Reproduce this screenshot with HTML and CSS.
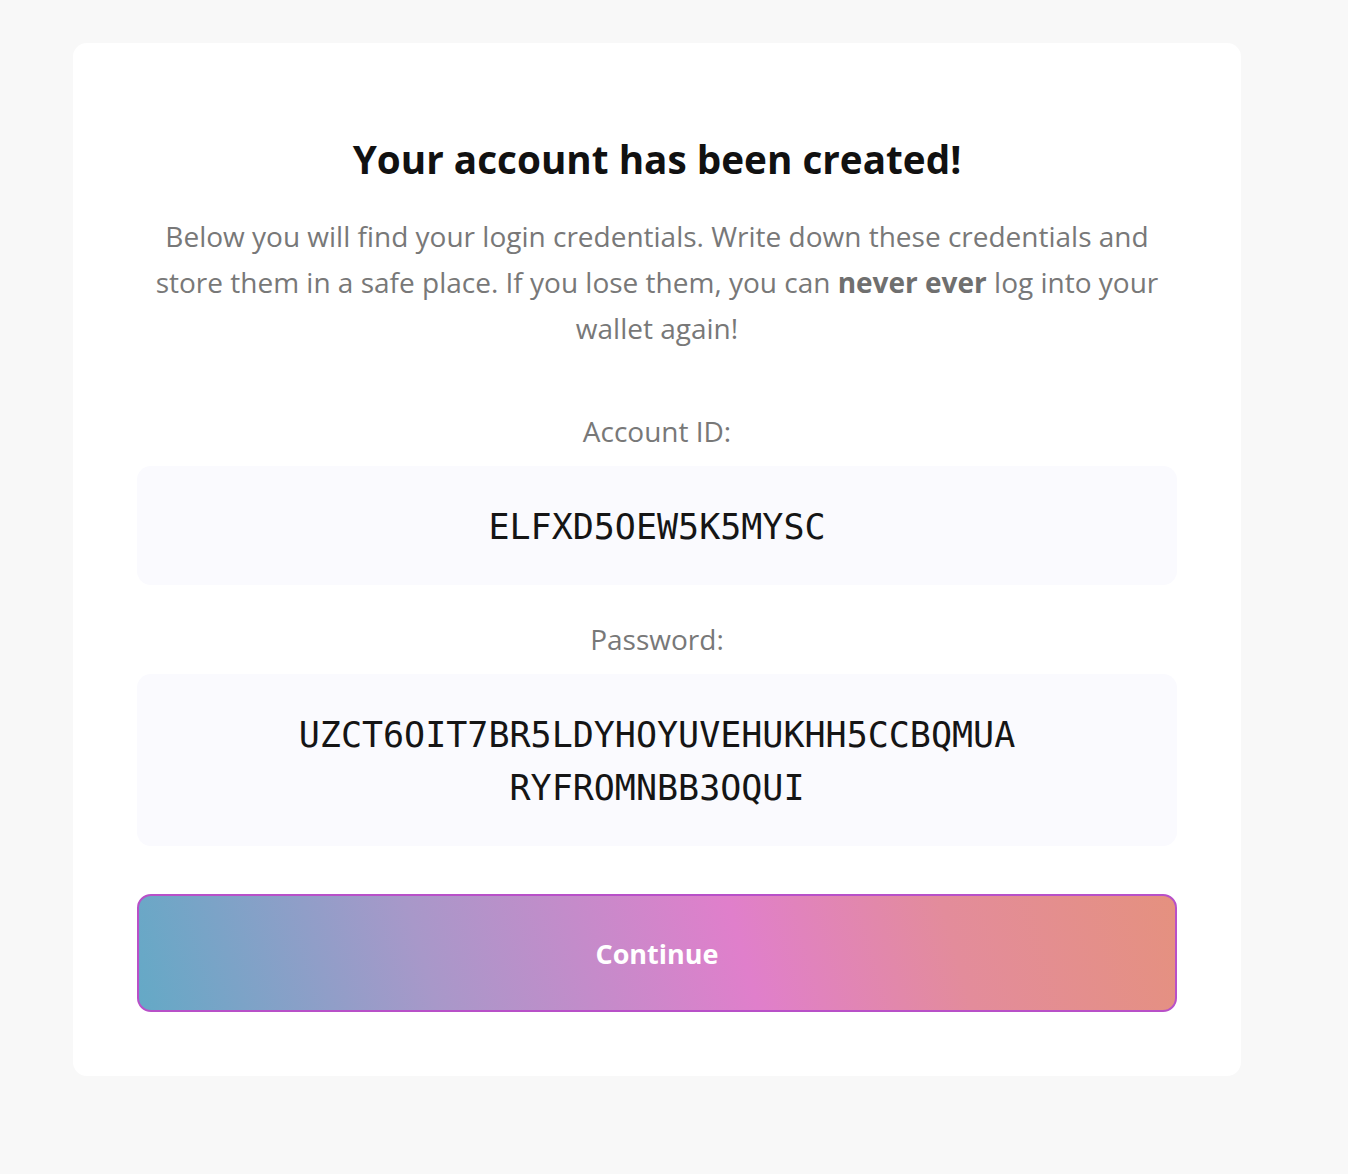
FILE: index.html
```html
<!DOCTYPE html>
<html lang="en">
<head>
<meta charset="utf-8">
<title>Account created</title>
<link rel="stylesheet" href="styles.css">
</head>
<body>
<main class="card">
  <h1 class="title">Your account has been created!</h1>
  <p class="intro">Below you will find your login credentials. Write down these credentials and store them in a safe place. If you lose them, you can <strong>never ever</strong> log into your wallet again!</p>
  <div class="field">
    <div class="label">Account ID:</div>
    <div class="value-box"><span class="value">ELFXD5OEW5K5MYSC</span></div>
  </div>
  <div class="field">
    <div class="label">Password:</div>
    <div class="value-box"><span class="value value-wrap">UZCT6OIT7BR5LDYHOYUVEHUKHH5CCBQMUARYFROMNBB3OQUI</span></div>
  </div>
  <button class="continue" type="button">Continue</button>
</main>
</body>
</html>
```

FILE: styles.css
```css
html, body {
  margin: 0;
  padding: 0;
}

body {
  background: #f8f8f8;
  font-family: "Open Sans", "Liberation Sans", sans-serif;
  padding: 43px 0 97px 73px;
  min-height: 1174px;
  box-sizing: border-box;
}

.card {
  width: 1168px;
  box-sizing: border-box;
  background: #ffffff;
  border-radius: 14px;
  padding: 90px 64px 64px;
  display: flex;
  flex-direction: column;
  text-align: center;
}

.title {
  margin: 0;
  font-size: 38.7px;
  line-height: 53px;
  font-weight: 700;
  color: #111111;
}

.intro {
  margin: 27px 0 0;
  font-size: 28px;
  line-height: 46px;
  color: #787878;
}

.intro strong {
  font-weight: 700;
  color: #6f6f6f;
}

.field {
  display: flex;
  flex-direction: column;
  gap: 12px;
  margin-top: 57px;
}

.field + .field {
  margin-top: 31px;
}

.label {
  font-size: 28px;
  line-height: 46px;
  color: #787878;
}

.value-box {
  background: #fafafe;
  border-radius: 14px;
  padding: 35px 0 31px;
}

.value {
  display: block;
  margin: 0 auto;
  font-family: "DejaVu Sans Mono", "Liberation Mono", monospace;
  font-size: 35px;
  line-height: 53px;
  color: #151515;
}

.value-wrap {
  max-width: 720px;
  word-break: break-all;
}

.continue {
  margin-top: 48px;
  height: 118px;
  border: 2px solid #b850c8;
  border-radius: 14px;
  background: linear-gradient(74deg, #64a9c6 0%, #a898c9 28%, #e07fcb 58%, #e38c9b 78%, #e5917f 100%);
  color: #ffffff;
  font-family: "Open Sans", "Liberation Sans", sans-serif;
  font-size: 27px;
  font-weight: 700;
  cursor: pointer;
}
```
